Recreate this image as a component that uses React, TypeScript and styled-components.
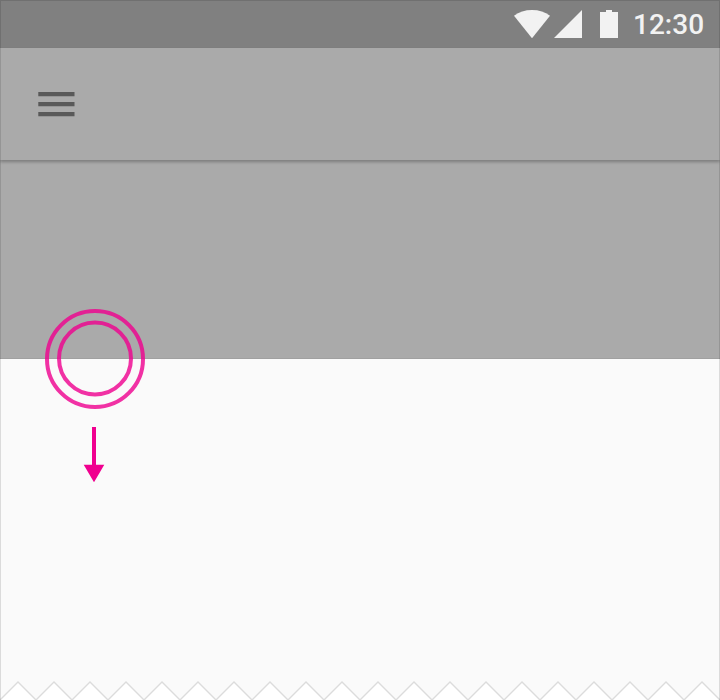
import React from 'react';
import styled, { createGlobalStyle } from 'styled-components';

const GlobalStyle = createGlobalStyle`
  body { margin: 0; background: #fff; }
  * { box-sizing: border-box; }
`;

const Screen = styled.main`
  position: relative;
  width: 720px;
  height: 700px;
  display: flex;
  flex-direction: column;
  overflow: hidden;
  background: #fff;
  font-family: Roboto, sans-serif;
`;

const StatusBar = styled.header`
  flex: none;
  height: 48px;
  display: flex;
  align-items: center;
  justify-content: flex-end;
  padding-right: 17px;
  background: #808080;
  color: #f2f2f2;
`;

const StatusIcons = styled.svg`
  width: 106px;
  height: 48px;
  margin-right: 13px;
  fill: currentColor;
`;

const Clock = styled.time`
  font-size: 28px;
  font-weight: 500;
  line-height: 46px;
  padding-top: 2px;
  width: 70px;
  white-space: nowrap;
`;

const AppBar = styled.nav`
  flex: none;
  position: relative;
  height: 112px;
  display: flex;
  align-items: center;
  padding-left: 38px;
  background: #aaa;
  box-shadow: 0 2px 3px rgba(0, 0, 0, 0.27);
`;

const MenuButton = styled.button`
  border: 0;
  padding: 0;
  background: none;
  display: flex;
  color: #595959;
`;

const Scrim = styled.section`
  flex: none;
  height: 199px;
  background: #aaa;
  border-bottom: 1px solid #a0a0a0;
`;

const Sheet = styled.section`
  flex: 1;
  display: flex;
  flex-direction: column;
  justify-content: flex-end;
  background: #fafafa;
`;

const TornEdge = styled.svg`
  display: block;
  flex: none;
`;

const Frame = styled.div`
  position: absolute;
  inset: 0;
  border: 1px solid rgba(0, 0, 0, 0.12);
  border-bottom: 0;
  pointer-events: none;
`;

const Gesture = styled.svg`
  position: absolute;
  left: 45px;
  top: 309px;
`;

const peaks = Array.from({ length: 20 }, (_, i) => `L${i * 36 + 18} 1L${i * 36 + 36} 19`).join('');
const tear = `M0 19${peaks}`;

export default function App() {
  return (
    <>
      <GlobalStyle />
      <Screen>
        <StatusBar>
          <StatusIcons viewBox="0 0 106 48">
            <path d="M0 15.8C5 12 11 10 18 10s13 2 18 5.8L18 38.2Z" />
            <path d="M40 38 68 10v28Z" />
            <path d="M86 12h6v-2h6v2h6v26H86Z" />
          </StatusIcons>
          <Clock>12:30</Clock>
        </StatusBar>
        <AppBar>
          <MenuButton aria-label="Menu">
            <svg width="37" height="26" fill="currentColor">
              <path d="M.3 1h36.2v4.2H.3zM.3 11h36.2v4.2H.3zM.3 21h36.2v4.2H.3z" />
            </svg>
          </MenuButton>
        </AppBar>
        <Scrim />
        <Sheet>
          <TornEdge width="720" height="19" viewBox="0 0 720 19">
            <path d={`${tear}Z`} fill="#fff" />
            <path d={tear} fill="none" stroke="#dcdcdc" strokeWidth="1.4" />
          </TornEdge>
        </Sheet>
        <Frame />
        <Gesture width="100" height="174" viewBox="0 0 100 174">
          <g fill="none" stroke="#f0008f" strokeWidth="4" opacity="0.8">
            <circle cx="50" cy="50" r="48" />
            <circle cx="50" cy="49.5" r="36" />
          </g>
          <path d="M47 118h4v37.7h8.3L49 173.3 38.7 155.7H47Z" fill="#f0008f" />
        </Gesture>
      </Screen>
    </>
  );
}
